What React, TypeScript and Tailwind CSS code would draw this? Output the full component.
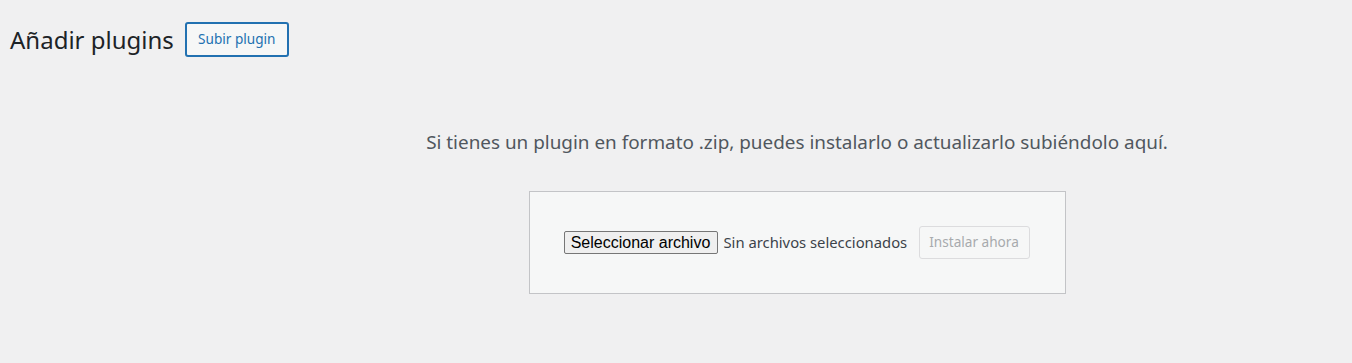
export default function App() {
  return (
    <div className="min-h-[363px] w-[1352px] bg-[#f0f0f1] font-['Noto_Sans',sans-serif] text-[#3c434a]">
      <div className="flex items-center gap-[11px] pl-[10px] pt-[22px]">
        <h1 className="text-[24px] leading-[35px] font-normal text-[#1d2327]">Añadir plugins</h1>
        <button className="h-[35px] w-[104px] rounded-[3px] border-2 border-[#2271b1] bg-[#f6f7f7] text-[13.6px] text-[#2271b1]">
          Subir plugin
        </button>
      </div>

      <div className="flex flex-col items-center pl-[242px]">
        <p className="mt-[72px] text-[18.9px] leading-[26px] text-[#50575e]">
          Si tienes un plugin en formato .zip, puedes instalarlo o actualizarlo subiéndolo aquí.
        </p>
        <form className="mt-[36px] flex h-[103px] w-[537px] items-center border border-[#c3c4c7] bg-[#f6f7f7] pl-[34px]">
          <span className="flex h-[23px] w-[154px] items-center justify-center rounded-[2px] border border-[#767676] bg-[#efefef] font-['Liberation_Sans',sans-serif] text-[16px] text-black">
            Seleccionar archivo
          </span>
          <span className="ml-[6px] w-[183px] whitespace-nowrap text-[14.8px] text-[#3c434a]">Sin archivos seleccionados</span>
          <button
            type="button"
            disabled
            className="ml-[12px] h-[33px] w-[111px] rounded-[3px] border border-[#dcdcde] bg-[#f6f7f7] text-[13.6px] text-[#a7aaad]"
          >
            Instalar ahora
          </button>
        </form>
      </div>
    </div>
  );
}
